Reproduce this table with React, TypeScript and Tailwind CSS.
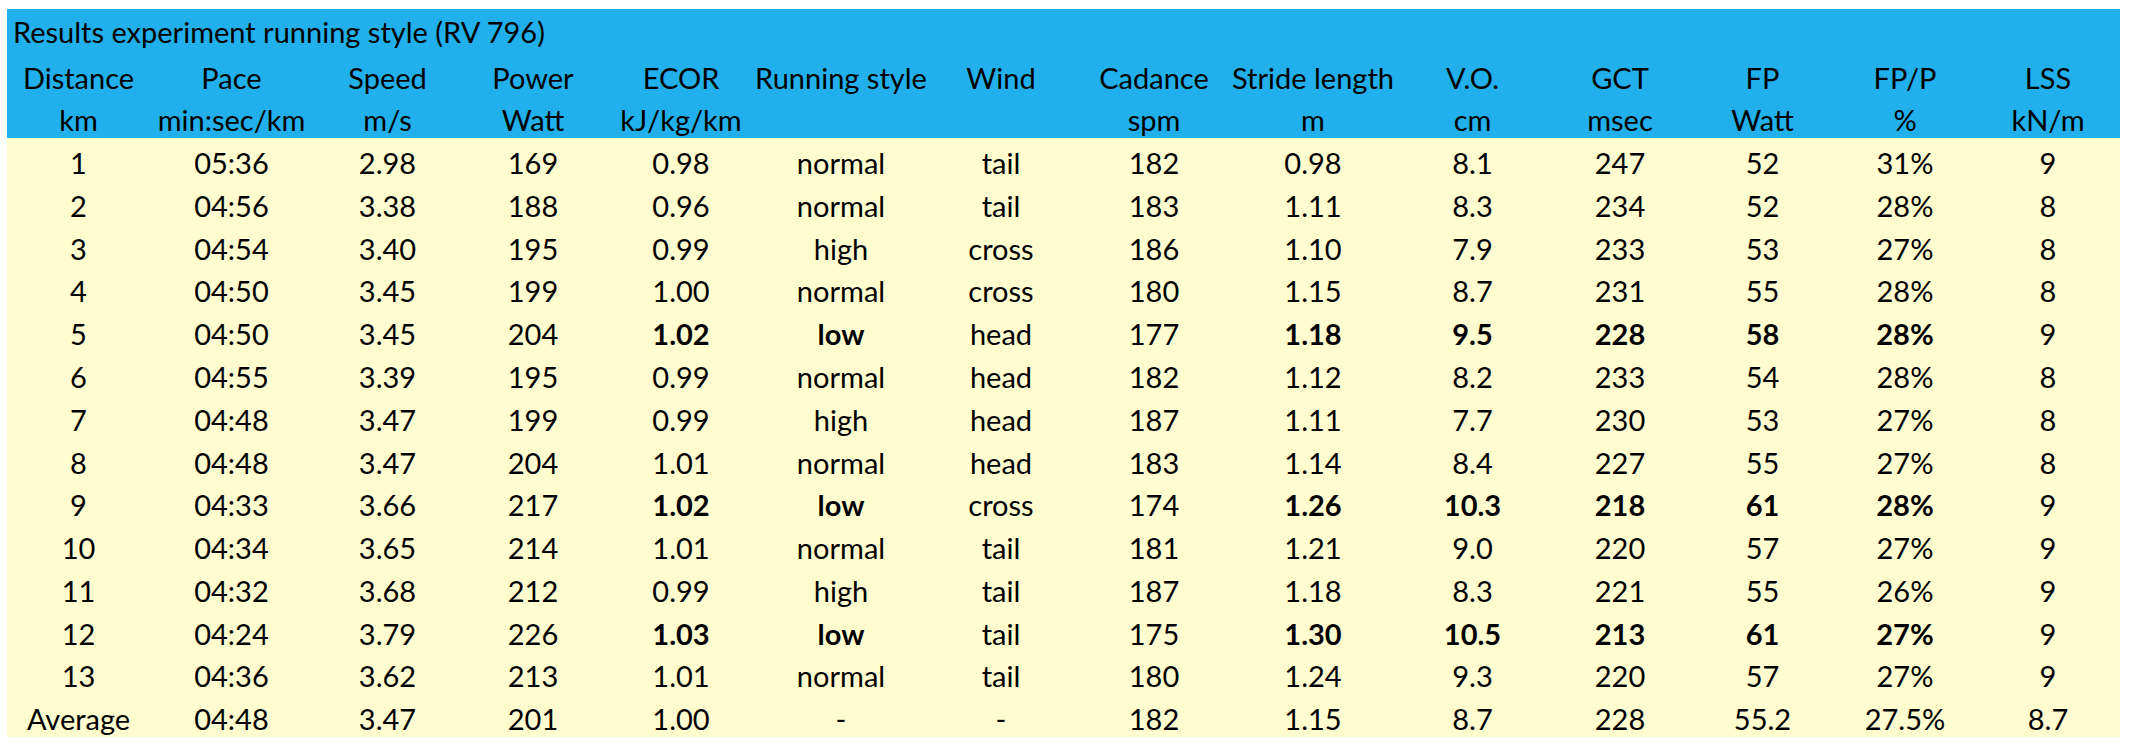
import React from 'react';

type Cell = string | { v: string; b: true };

const cols = 'grid grid-cols-[143px_163px_149px_142px_154px_166px_154px_152px_166px_153px_142px_143px_142px_144px]';

const head1 = ['Distance', 'Pace', 'Speed', 'Power', 'ECOR', 'Running style', 'Wind', 'Cadance', 'Stride length', 'V.O.', 'GCT', 'FP', 'FP/P', 'LSS'];
const head2 = ['km', 'min:sec/km', 'm/s', 'Watt', 'kJ/kg/km', '', '', 'spm', 'm', 'cm', 'msec', 'Watt', '%', 'kN/m'];

const B = (v: string): Cell => ({ v, b: true });

const rows: Cell[][] = [
  ['1', '05:36', '2.98', '169', '0.98', 'normal', 'tail', '182', '0.98', '8.1', '247', '52', '31%', '9'],
  ['2', '04:56', '3.38', '188', '0.96', 'normal', 'tail', '183', '1.11', '8.3', '234', '52', '28%', '8'],
  ['3', '04:54', '3.40', '195', '0.99', 'high', 'cross', '186', '1.10', '7.9', '233', '53', '27%', '8'],
  ['4', '04:50', '3.45', '199', '1.00', 'normal', 'cross', '180', '1.15', '8.7', '231', '55', '28%', '8'],
  ['5', '04:50', '3.45', '204', B('1.02'), B('low'), 'head', '177', B('1.18'), B('9.5'), B('228'), B('58'), B('28%'), '9'],
  ['6', '04:55', '3.39', '195', '0.99', 'normal', 'head', '182', '1.12', '8.2', '233', '54', '28%', '8'],
  ['7', '04:48', '3.47', '199', '0.99', 'high', 'head', '187', '1.11', '7.7', '230', '53', '27%', '8'],
  ['8', '04:48', '3.47', '204', '1.01', 'normal', 'head', '183', '1.14', '8.4', '227', '55', '27%', '8'],
  ['9', '04:33', '3.66', '217', B('1.02'), B('low'), 'cross', '174', B('1.26'), B('10.3'), B('218'), B('61'), B('28%'), '9'],
  ['10', '04:34', '3.65', '214', '1.01', 'normal', 'tail', '181', '1.21', '9.0', '220', '57', '27%', '9'],
  ['11', '04:32', '3.68', '212', '0.99', 'high', 'tail', '187', '1.18', '8.3', '221', '55', '26%', '9'],
  ['12', '04:24', '3.79', '226', B('1.03'), B('low'), 'tail', '175', B('1.30'), B('10.5'), B('213'), B('61'), B('27%'), '9'],
  ['13', '04:36', '3.62', '213', '1.01', 'normal', 'tail', '180', '1.24', '9.3', '220', '57', '27%', '9'],
  ['Average', '04:48', '3.47', '201', '1.00', '-', '-', '182', '1.15', '8.7', '228', '55.2', '27.5%', '8.7'],
];

const Row = ({ cells, bg }: { cells: Cell[]; bg: string }) => (
  <div className={`${cols} flex-1 ${bg}`}>
    {cells.map((c, i) => {
      const bold = typeof c !== 'string';
      const text = typeof c === 'string' ? c : c.v;
      return (
        <div
          key={i}
          className={`flex items-center justify-center whitespace-nowrap pt-[6px] ${bold ? 'font-bold' : 'font-normal'}`}
        >
          {text}
        </div>
      );
    })}
  </div>
);

export default function App() {
  return (
    <div className="w-[2130px] h-[748px] bg-white pt-[9px] pl-[7px] text-black text-[29px] leading-none font-['Lato',sans-serif]">
      <div className="w-[2113px] h-[728px] flex flex-col">
        {/* header (blue) */}
        <div className="flex-1 flex items-center pl-[6px] pt-[1px] bg-[#21b0eb] whitespace-nowrap">
          Results experiment running style (RV 796)
        </div>
        <Row cells={head1} bg="bg-[#21b0eb]" />
        <Row cells={head2} bg="bg-[#21b0eb]" />

        {/* data (yellow) */}
        {rows.map((r, i) => (
          <Row key={i} cells={r} bg="bg-[#fffdcf]" />
        ))}
      </div>
    </div>
  );
}
